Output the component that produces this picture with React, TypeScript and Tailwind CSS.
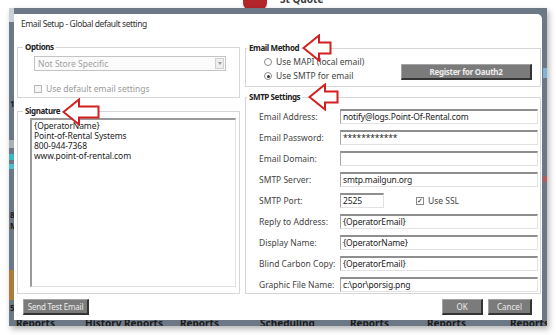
import React from "react";

const FONT = "font-['Noto_Sans',sans-serif]";

function Field({ value, className = "" }: { value?: string; className?: string }) {
  return (
    <div
      className={`h-[15px] bg-white border border-t-2 border-t-[#8e8e8e] border-l-[#a6a6a6] border-r-[#e2e2e2] border-b-[#e2e2e2] pl-[2px] flex items-center text-[#222] tracking-[-0.15px] whitespace-nowrap overflow-hidden ${className}`}
    >
      {value}
    </div>
  );
}

function GrayButton({ label, className = "" }: { label: string; className?: string }) {
  return (
    <div
      className={`h-[16px] flex items-center justify-center whitespace-nowrap text-[8px] bg-[#7b7b7b] text-[#ececec] border border-[#a4a4a4] border-r-[#343434] border-b-[#343434] border-r-2 border-b-2 ${className}`}
    >
      {label}
    </div>
  );
}

function Radio({ checked }: { checked?: boolean }) {
  return (
    <span className="w-[8px] h-[8px] rounded-full border border-[#8a8a8a] bg-white flex items-center justify-center">
      {checked && <span className="w-[3px] h-[3px] rounded-full bg-[#333]" />}
    </span>
  );
}

function Arrow({ left, top, width }: { left: number; top: number; width: number }) {
  const h = 28;
  return (
    <svg
      width={width}
      height={h}
      viewBox={`0 0 ${width} ${h}`}
      className="absolute z-20"
      style={{ left, top }}
    >
      <path
        d={`M1.5 14 L17 1.5 L17 8.5 L${width - 1.5} 8.5 L${width - 1.5} 19.5 L17 19.5 L17 26.5 Z`}
        fill="white"
        stroke="#d21f1f"
        strokeWidth="2"
      />
    </svg>
  );
}

const rows: { label: string; value?: string }[] = [
  { label: "Email Address:", value: "notify@logs.Point-Of-Rental.com" },
  { label: "Email Password:", value: "************" },
  { label: "Email Domain:", value: "" },
  { label: "SMTP Server:", value: "smtp.mailgun.org" },
  { label: "SMTP Port:" },
  { label: "Reply to Address:", value: "{OperatorEmail}" },
  { label: "Display Name:", value: "{OperatorName}" },
  { label: "Blind Carbon Copy:", value: "{OperatorEmail}" },
  { label: "Graphic File Name:", value: "c:\\por\\porsig.png" },
];

const backTabs = [
  { text: "Reports", left: 7 },
  { text: "History Reports", left: 76 },
  { text: "Reports", left: 171 },
  { text: "Scheduling", left: 251 },
  { text: "Reports", left: 341 },
  { text: "Reports", left: 418 },
  { text: "Reports", left: 501 },
];

const legend = "px-[2px] font-bold text-[8px] tracking-[-0.4px] text-[#222]";

export default function App() {
  return (
    <div className={`relative w-[556px] h-[335px] bg-white overflow-hidden text-[8.5px] leading-[12px] text-[#444] ${FONT}`}>
      {/* bits of the app behind, above the panel */}
      <div className="absolute left-[243px] top-[-8px] w-[24px] h-[18px] rounded-[7px] bg-[#b3262a]" />
      <div className="absolute left-[280px] top-[-7px] text-[10px] font-bold text-[#3a3a3a]">St Quote</div>

      <div className="pt-[8px] pl-[9px]">
        <div className="relative w-[538px] h-[318px] bg-[#6d7886] pt-[6px] pl-[5px] shadow-[2px_3px_6px_rgba(0,0,0,0.3)] overflow-hidden">
          {/* left strip fragments */}
          <div className="absolute left-0 top-0 w-[5px] h-[14px] bg-[#c9d0d6]" />
          <div className="absolute left-[1px] top-[92px] text-[8px] leading-none font-bold text-[#1c1c1c]">1</div>
          <div className="absolute left-0 top-[132px] w-[5px] h-[8px] bg-[#a9b0b6]" />
          <div className="absolute left-0 top-[146px] w-[5px] h-[6px] bg-[#3fb6c2]" />
          <div className="absolute left-0 top-[156px] w-[5px] h-[5px] bg-[#4cc0c8]" />
          <div className="absolute left-[1px] top-[203px] text-[8px] leading-none font-bold text-[#1c1c1c]">8</div>
          <div className="absolute left-[1px] top-[214px] text-[8px] leading-none font-bold text-[#1c1c1c]">M</div>
          <div className="absolute left-0 top-[262px] w-[5px] h-[30px] bg-[#b07a3c]" />
          <div className="absolute left-[1px] top-[296px] text-[8px] leading-none font-bold text-[#1c1c1c]">5</div>
          {/* right strip fragments */}
          <div className="absolute right-0 top-[60px] w-[4px] h-[10px] bg-[#7fb4d6]" />
          <div className="absolute right-0 top-[168px] w-[4px] h-[6px] bg-[#b35a5a]" />
          {backTabs.map((t) => (
            <div
              key={t.left}
              className="absolute top-[309px] text-[10px] font-bold text-[#1a1a1a] whitespace-nowrap"
              style={{ left: t.left }}
            >
              {t.text}
            </div>
          ))}

          {/* dialog */}
          <div className="relative z-10 w-[528px] h-[306px] bg-white rounded-tr-[5px] flex flex-col">
            <div className="h-[20px] pl-[7px] flex items-center text-[8.5px] tracking-[-0.4px] text-[#333]">
              Email Setup - Global default setting
            </div>

            <div className="flex gap-[5px] pl-[3px] mt-[7px]">
              {/* left column */}
              <div className="w-[223px] flex flex-col">
                <fieldset className="h-[57px] border border-[#d6d6d6]">
                  <legend className={`ml-[5px] ${legend}`}>Options</legend>
                  <div className="mt-[3px] ml-[16px] w-[192px] h-[15px] border border-[#c4c4c4] bg-[#fbfbfb] flex items-center justify-between">
                    <span className="pl-[3px] text-[#a0a0a0]">Not Store Specific</span>
                    <span className="w-[9px] h-[11px] mr-[1px] border border-[#d0d0d0] bg-[#eeeeee] flex items-center justify-center">
                      <span className="w-0 h-0 border-l-[2px] border-r-[2px] border-t-[3px] border-l-transparent border-r-transparent border-t-[#9a9a9a]" />
                    </span>
                  </div>
                  <div className="mt-[13px] ml-[16px] h-[10px] flex items-center gap-[4px] text-[#9a9a9a]">
                    <span className="w-[8px] h-[8px] border border-[#b8b8b8] bg-[#f4f4f4]" />
                    Use default email settings
                  </div>
                </fieldset>

                <fieldset className="mt-[7px] h-[189px] border border-[#d6d6d6]">
                  <legend className={`ml-[5px] ${legend}`}>Signature</legend>
                  <div className="mt-[1px] ml-[12px] w-[206px] h-[169px] border border-l-2 border-t-2 border-l-[#9a9a9a] border-t-[#9a9a9a] border-r-[#e2e2e2] border-b-[#e2e2e2] pl-[2px] pt-[1px] leading-[10px] tracking-[-0.1px] text-[#222]">
                    <div>{"{OperatorName}"}</div>
                    <div>Point-of-Rental Systems</div>
                    <div>800-944-7368</div>
                    <div>www.point-of-rental.com</div>
                  </div>
                </fieldset>
              </div>

              {/* right column */}
              <div className="w-[296px] flex flex-col">
                <fieldset className="mt-[1px] h-[45px] border border-[#d6d6d6]">
                  <legend className={`ml-[1px] ${legend}`}>Email Method</legend>
                  <div className="flex items-start">
                    <div className="ml-[18px] flex flex-col">
                      <div className="mt-[3px] h-[10px] flex items-center gap-[4px]">
                        <Radio />
                        Use MAPI (local email)
                      </div>
                      <div className="mt-[4px] h-[10px] flex items-center gap-[4px]">
                        <Radio checked />
                        Use SMTP for email
                      </div>
                    </div>
                    <GrayButton label="Register for Oauth2" className="ml-auto mr-[8px] mt-[10px] w-[131px] font-bold tracking-[-0.3px]" />
                  </div>
                </fieldset>

                <fieldset className="mt-[4px] h-[203px] border border-[#d6d6d6]">
                  <legend className={`ml-[1px] ${legend}`}>SMTP Settings</legend>
                  <div className="mt-[6px] pl-[13px] grid grid-cols-[81px_198px] gap-y-[6px]">
                    {rows.map((r) => (
                      <React.Fragment key={r.label}>
                        <div className="h-[15px] flex items-center whitespace-nowrap">{r.label}</div>
                        {r.label === "SMTP Port:" ? (
                          <div className="h-[15px] flex items-center">
                            <Field value="2525" className="w-[44px]" />
                            <span className="ml-[32px] w-[8px] h-[8px] border border-[#8a8a8a] bg-white flex items-center justify-center text-[7px] leading-none text-[#222]">
                              ✓
                            </span>
                            <span className="ml-[4px]">Use SSL</span>
                          </div>
                        ) : (
                          <Field value={r.value} />
                        )}
                      </React.Fragment>
                    ))}
                  </div>
                </fieldset>
              </div>
            </div>

            <div className="mt-[5px] flex">
              <GrayButton label="Send Test Email" className="ml-[9px] w-[66px] tracking-[-0.2px]" />
              <GrayButton label="OK" className="ml-auto w-[41px]" />
              <GrayButton label="Cancel" className="ml-[5px] mr-[10px] w-[44px]" />
            </div>
          </div>
        </div>
      </div>

      <Arrow left={302} top={34} width={30} />
      <Arrow left={308} top={83} width={31} />
      <Arrow left={62} top={98} width={38} />
    </div>
  );
}
